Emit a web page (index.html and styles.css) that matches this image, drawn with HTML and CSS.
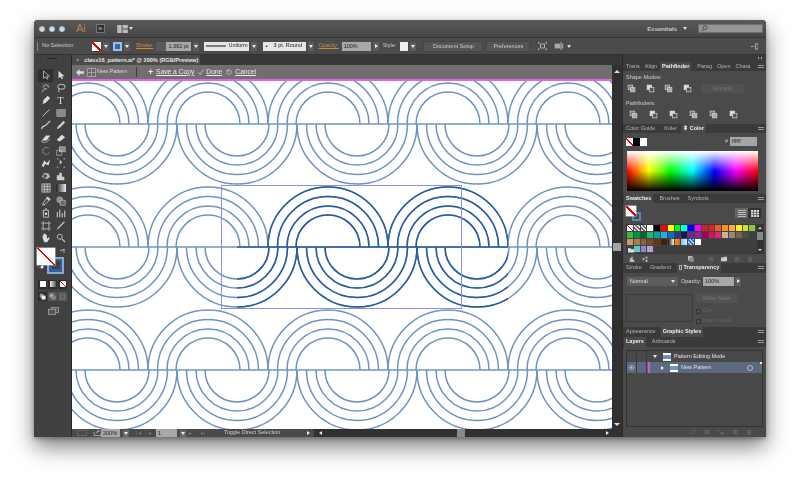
FILE: index.html
```html
<!DOCTYPE html>
<html lang="en">
<head>
<meta charset="utf-8">
<title>class16_pattern.ai</title>
<link rel="stylesheet" href="styles.css">
</head>
<body>
<svg class="defs" width="0" height="0" aria-hidden="true">
  <defs>
    <symbol id="pf" viewBox="0 0 12 12"><rect x="1.5" y="1.5" width="6" height="6" fill="#777" stroke="#ccc"/><rect x="4.5" y="4.5" width="6" height="6" fill="#aaa" stroke="#ccc"/></symbol>
    <symbol id="pg" viewBox="0 0 12 12"><rect x="1.5" y="1.5" width="6" height="6" fill="#ddd" stroke="#ddd"/><rect x="4.5" y="4.5" width="6" height="6" fill="#555" stroke="#ccc"/></symbol>
    <g id="up" fill="none"><path d="M-60 0A60 60 0 0 1 60 0M-50.5 0A50.5 50.5 0 0 1 50.5 0M-41 0A41 41 0 0 1 41 0M-32 0A32 32 0 0 1 32 0"/></g>
    <g id="dn" fill="none"><path d="M-60 0A60 60 0 0 0 60 0M-50.5 0A50.5 50.5 0 0 0 50.5 0M-41 0A41 41 0 0 0 41 0M-32 0A32 32 0 0 0 32 0"/></g>
    <g id="rowset">
      <use href="#up" x="88"/><use href="#up" x="208"/><use href="#up" x="328"/><use href="#up" x="448"/><use href="#up" x="568"/>
      <use href="#dn" x="-3"/><use href="#dn" x="117"/><use href="#dn" x="237"/><use href="#dn" x="357"/><use href="#dn" x="477"/><use href="#dn" x="597"/>
      <path d="M72 0H612" fill="none"/>
    </g>
    <g id="tileset">
      <use href="#up" x="328"/><use href="#up" x="448"/>
      <use href="#dn" x="237"/><use href="#dn" x="357"/><use href="#dn" x="477"/>
      <path d="M221 0H508" fill="none"/>
    </g>
    <clipPath id="tile"><rect x="237" y="180" width="271" height="130"/></clipPath>
  </defs>
</svg>
<div class="win">
  <header class="title">
    <div class="lights"><i></i><i></i><i></i></div>
    <span class="logo">Ai</span>
    <span class="br">Br</span>
    <svg class="wsp" viewBox="0 0 12 9"><path d="M0 0h5v9H0zM6 0h6v4H6zM6 5h6v4H6z" fill="#bbb"/></svg>
    <span class="tri-d"></span>
    <span class="fill"></span>
    <span class="ess">Essentials</span>
    <span class="tri-d ess-t"></span>
    <span class="search"><svg viewBox="0 0 8 8"><circle cx="4.5" cy="3" r="2.2" fill="none" stroke="#333" stroke-width=".8"/><path d="M3 5L1 7" stroke="#333"/></svg></span>
  </header>
  <div class="ctrl">
    <span class="grip"></span>
    <span class="lbl nosel">No Selection</span>
    <span class="sw-none cfill"></span><span class="ab"></span>
    <span class="strokeic"></span><span class="ab"></span>
    <span class="lbl orange m5">Stroke:</span>
    <span class="stepper"></span>
    <span class="inp w25">1.392 pt</span><span class="ab m3"></span>
    <span class="uni"><svg viewBox="0 0 22 2"><path d="M0 1H22" stroke="#222" stroke-width="1.2"/></svg>Uniform</span><span class="ab"></span>
    <span class="uni rnd"><b>•</b>3 pt. Round</span><span class="ab"></span>
    <span class="lbl orange m4">Opacity:</span>
    <span class="inp w29 m3">100%</span><span class="ab m3 tri-r"></span>
    <span class="lbl m4">Style:</span>
    <span class="white-sw"></span><span class="ab"></span>
    <span class="btn w58">Document Setup</span>
    <span class="btn w42">Preferences</span>
    <svg class="ci c1" viewBox="0 0 10 10"><path d="M0 2V0h2M8 0h2v2M10 8v2H8M2 10H0V8M2.5 2.5h5v5h-5z" fill="none" stroke="#ccc"/></svg>
    <svg class="ci c2" viewBox="0 0 12 10"><path d="M0 2h7v6H0z" fill="#aaa"/><path d="M8 0v10M10 2v6" stroke="#ccc"/></svg>
    <span class="tri-d c3"></span>
    <span class="fill"></span>
    <svg class="ci c4" viewBox="0 0 8 8"><path d="M3 4H0M5 1h3v6H5z" fill="none" stroke="#bbb"/></svg>
  </div>
  <div class="main">
    <aside class="tools">
      <div class="tgrip"></div>
      <div class="tgrid">
        <span class="tool on"><svg viewBox="0 0 12 12"><path d="M3 1v9l2.500-2 1.500 3 1.500-.8L7 7.400h3z" fill="none" stroke="#ddd" stroke-width=".8"/></svg></span>
        <span class="tool"><svg viewBox="0 0 12 12"><path d="M3 1v9l2.500-2 1.500 3 1.500-.8L7 7.400h3z" fill="#ddd"/></svg></span>
        <span class="tool"><svg viewBox="0 0 12 12"><path d="M5 6l-4 5M6 1v2M6 6v2M2 4.500h2M8 4.500h2M3 2l1.500 1.500M9 2L7.500 3.500" stroke="#ddd"/></svg></span>
        <span class="tool"><svg viewBox="0 0 12 12"><ellipse cx="6.500" cy="4.500" rx="4.500" ry="3" fill="none" stroke="#ddd"/><path d="M4 7q-2 2 0 4" stroke="#ddd" fill="none"/></svg></span>
        <span class="tool"><svg viewBox="0 0 12 12"><path d="M8 1l3 3-5 5-4 2 1-5z" fill="#ddd"/></svg></span>
        <span class="tool txt">T</span>
        <span class="tool"><svg viewBox="0 0 12 12"><path d="M2 10L10 2" stroke="#ddd"/></svg></span>
        <span class="tool"><svg viewBox="0 0 12 12"><rect x="1" y="2" width="10" height="8" fill="#888" stroke="#bbb" stroke-width=".6"/></svg></span>
        <span class="tool"><svg viewBox="0 0 12 12"><path d="M11 1L5 7M1 11q0-4 4-4" stroke="#ddd" stroke-width="1.300" fill="none"/></svg></span>
        <span class="tool"><svg viewBox="0 0 12 12"><path d="M9 1l2 2-7 7-3 1 1-3z" fill="#ccc"/></svg></span>
        <span class="tool"><svg viewBox="0 0 12 12"><path d="M1 9L6 3h5L7 9z" fill="#ddd"/><path d="M1 9v2h6l4-4" fill="none" stroke="#ddd" stroke-width=".7"/></svg></span>
        <span class="tool"><svg viewBox="0 0 12 12"><path d="M1 8l6-6 4 3-6 5H3z" fill="#ddd"/></svg></span>
        <span class="tool"><svg viewBox="0 0 12 12"><path d="M9 3a4 4 0 1 0 1 4" fill="none" stroke="#ccc" stroke-dasharray="1.500 1"/></svg></span>
        <span class="tool"><svg viewBox="0 0 12 12"><rect x="4" y="1" width="7" height="6" fill="#888" stroke="#ccc" stroke-width=".7"/><rect x="1" y="5" width="6" height="6" fill="none" stroke="#ccc" stroke-width=".7"/></svg></span>
        <span class="tool"><svg viewBox="0 0 12 12"><path d="M1 9l3-6 3 3 4-4-2 7-4-2-2 4z" fill="#ddd"/></svg></span>
        <span class="tool"><svg viewBox="0 0 12 12"><path d="M1 1h2M1 11h2M9 1h2M9 11h2M5 3l2 2-2 2z" stroke="#ccc" fill="#ccc"/></svg></span>
        <span class="tool"><svg viewBox="0 0 12 12"><path d="M1 7l3-5 5 1 2 4-4 3z" fill="#bbb"/><circle cx="5" cy="6" r="2" fill="#444"/></svg></span>
        <span class="tool"><svg viewBox="0 0 12 12"><path d="M1 11V5h3V2h3v5h3v4z" fill="#ccc"/></svg></span>
        <span class="tool"><svg viewBox="0 0 12 12"><path d="M1 1h10v10H1zM4.300 1v10M7.600 1v10M1 4.300h10M1 7.600h10" fill="#666" stroke="#ddd" stroke-width=".7"/></svg></span>
        <span class="tool grad"></span>
        <span class="tool"><svg viewBox="0 0 12 12"><path d="M8 1l3 3-6 6-3 1 1-3z" fill="none" stroke="#ddd"/><path d="M7 2l3 3" stroke="#ddd" stroke-width="2"/></svg></span>
        <span class="tool"><svg viewBox="0 0 12 12"><circle cx="4.500" cy="4.500" r="3.500" fill="#888" stroke="#ccc" stroke-width=".7"/><rect x="5" y="5" width="6" height="6" fill="#666" stroke="#ccc" stroke-width=".7"/></svg></span>
        <span class="tool"><svg viewBox="0 0 12 12"><path d="M5 1h2v2h2v8H3V3h2zM1 3h1M1 6h1" stroke="#ccc" fill="none"/><circle cx="6" cy="7" r="1.500" fill="#ddd"/></svg></span>
        <span class="tool"><svg viewBox="0 0 12 12"><path d="M1.500 11V5M4.500 11V2M7.500 11V6M10.500 11V3" stroke="#ccc" stroke-width="1.300"/></svg></span>
        <span class="tool"><svg viewBox="0 0 12 12"><rect x="2.500" y="2.500" width="7" height="7" fill="none" stroke="#ccc"/><path d="M0 2.500h2M10 2.500h2M0 9.500h2M10 9.500h2M2.500 0v2M9.500 0v2M2.500 10v2M9.500 10v2" stroke="#ccc" stroke-width=".7"/></svg></span>
        <span class="tool"><svg viewBox="0 0 12 12"><path d="M11 1L4 8 1 11l1-3 7-7z" fill="#ccc"/></svg></span>
        <span class="tool"><svg viewBox="0 0 12 12"><path d="M2 6V3h1v2-4h1v4-4h1.500v4V2H7v5l2-2 1.500 1-3 5H4z" fill="#ddd"/></svg></span>
        <span class="tool"><svg viewBox="0 0 12 12"><circle cx="4.500" cy="4.500" r="3" fill="none" stroke="#ccc"/><path d="M7 7l4 4" stroke="#ccc" stroke-width="1.500"/></svg></span>
      </div>
      <div class="fs">
        <div class="fs-top">
          <span class="bigfill"></span>
          <svg class="swap" viewBox="0 0 6 6"><path d="M1 1h3v3M3 0L4 1 5 0M0 2l1-1 1 1" fill="none" stroke="#ccc" stroke-width=".7"/></svg>
        </div>
        <div class="fs-bot">
          <svg class="deft" viewBox="0 0 6 6"><circle cx="2.500" cy="2.500" r="2.300" fill="#222" stroke="#aaa" stroke-width=".5"/><circle cx="4" cy="4" r="1.500" fill="#eee"/></svg>
          <span class="bigstroke"></span>
        </div>
      </div>
      <div class="modes">
        <span class="mode"><i class="m-w"></i></span><span class="mode"><i class="m-g"></i></span><span class="mode"><i class="sw-none m-n"></i></span>
      </div>
      <div class="modes draw">
        <span class="mode d1"><svg viewBox="0 0 8 8"><circle cx="3" cy="3" r="2.500" fill="#999"/><rect x="3" y="3" width="4.500" height="4.500" fill="#eee"/></svg></span>
        <span class="mode d2"><svg viewBox="0 0 8 8"><circle cx="3" cy="3" r="2.500" fill="#aaa"/><rect x="3" y="3" width="4.500" height="4.500" fill="#888"/></svg></span>
        <span class="mode d3"><svg viewBox="0 0 8 8"><rect x="2" y="2" width="4.500" height="4.500" fill="none" stroke="#777"/></svg></span>
      </div>
      <svg class="screen" viewBox="0 0 12 9"><rect x="3.500" y=".5" width="8" height="6" fill="#555" stroke="#bbb" stroke-width=".7"/><rect x=".5" y="2.500" width="8" height="6" fill="#555" stroke="#bbb" stroke-width=".7"/></svg>
    </aside>

    <section class="center">
      <div class="doctabs"><div class="doctab"><span class="x">×</span>class16_pattern.ai* @ 200% (RGB/Preview)</div></div>
      <div class="patbar">
        <svg class="back" viewBox="0 0 9 8"><path d="M0 4l4-4v2.500h5v3H4V8z" fill="#ddd"/></svg>
        <svg class="pat-ic" viewBox="0 0 9 9"><path d="M.5.5h8v8h-8zM4.500.5v8M.5 4.500h8" fill="#666" stroke="#bbb" stroke-width=".7"/></svg>
        <span class="pat-name">New Pattern</span>
        <span class="sep"></span>
        <span class="plus">+</span><span class="act">Save a Copy</span>
        <svg class="check" viewBox="0 0 7 7"><path d="M.5 4l2 2.500L6.500.5" fill="none" stroke="#ccc"/></svg><span class="act">Done</span>
        <svg class="clock" viewBox="0 0 7 7"><circle cx="3.500" cy="3.500" r="2.800" fill="none" stroke="#ccc" stroke-width=".8"/><path d="M1 2h2v2" fill="none" stroke="#ccc" stroke-width=".7"/></svg><span class="act">Cancel</span>
      </div>
      <div class="work">
        <div class="canvas">
          <svg class="art" viewBox="72 79 540 350" width="540" height="350">
            <g class="base">
              <use href="#rowset" y="124"/><use href="#rowset" y="247"/><use href="#rowset" y="370"/>
            </g>
            <g class="dark" clip-path="url(#tile)"><use href="#tileset" y="247"/></g>
            <rect class="selbox" x="221.500" y="185.500" width="240" height="123"/>
            <path class="magenta" d="M72 80H612"/>
          </svg>
        </div>
        <div class="vscroll"><span class="arrow-u"></span><span class="thumb"></span><span class="arrow-dn"></span></div>
      </div>
      <div class="status">
        <svg class="st1" viewBox="0 0 10 6"><path d="M.5.5h9v5h-9z" fill="none" stroke="#666"/></svg>
        <svg class="st2" viewBox="0 0 9 7"><path d="M.5 2v4.500h8V4M3 4q0-3 3-3M5 0l2 1-2 2" fill="none" stroke="#ccc" stroke-width=".8"/></svg>
        <span class="inp zoomv">200%</span><span class="ab lt"></span>
        <span class="nav nv1">|◂</span><span class="nav">◂</span>
        <span class="inp pagev">1</span><span class="ab lt"></span>
        <span class="nav nv2">▸</span><span class="nav">▸|</span>
        <span class="status-txt">Toggle Direct Selection</span>
        <span class="tri-r2"></span>
        <div class="hscroll"><span class="tri-l2"></span><span class="hthumb"></span><span class="tri-r2 hend"></span></div>
      </div>
    </section>

    <aside class="dock">
      <div class="dockgrip"><span></span></div>

      <nav class="tabs">
        <span>Trans</span><span>Align</span><span class="active a-pf">Pathfinder</span><span class="t-pa">Parag</span><span>Open</span><span>Chara</span><em class="menu"></em>
      </nav>
      <div class="pane p-path">
        <div class="ph">Shape Modes:</div>
        <div class="irow ir1">
          <svg><use href="#pf"/></svg><svg><use href="#pg"/></svg><svg><use href="#pf"/></svg><svg><use href="#pg"/></svg>
          <span class="dbtn exp">Expand</span>
        </div>
        <div class="ph ph2">Pathfinders:</div>
        <div class="irow ir2">
          <svg><use href="#pf"/></svg><svg><use href="#pg"/></svg><svg><use href="#pg"/></svg><svg><use href="#pf"/></svg><svg><use href="#pf"/></svg><svg><use href="#pg"/></svg>
        </div>
      </div>

      <nav class="tabs">
        <span>Color Guide</span><span class="t-k">Kuler</span><span class="active a-col">⬍ Color</span><em class="menu"></em>
      </nav>
      <div class="pane p-color">
        <div class="colrow">
          <span class="sw-none csw"></span><span class="csw blk"></span><span class="csw wht"></span>
          <span class="hash">#</span><span class="hexin">ffffff</span>
        </div>
        <div class="spectrum"></div>
      </div>

      <nav class="tabs wide">
        <span class="active a-sw">Swatches</span><span>Brushes</span><span>Symbols</span><em class="menu"></em>
      </nav>
      <div class="pane p-sw">
        <div class="swtop">
          <span class="mini"><span class="sw-none minif"></span><span class="minis"></span></span>
          <span class="view">
            <i class="v-list"><svg viewBox="0 0 8 7"><path d="M0 .5h8M0 2.500h8M0 4.500h8M0 6.500h8" stroke="#bbb"/></svg></i>
            <i class="v-grid"><svg viewBox="0 0 8 7"><path d="M0 0h8v7H0z" fill="#ddd"/><path d="M2.500 0v7M5.500 0v7M0 2.300h8M0 4.700h8" stroke="#333" stroke-width=".6"/></svg></i>
          </span>
        </div>
        <div class="swbox">
          <div class="swgrid">
            <i class="sw-none"></i><i class="sw-reg"></i><i class="sw-reg"></i><i style="background:#fff"></i><i style="background:#000"></i><i style="background:#f00"></i><i style="background:#ff0"></i><i style="background:#0f0"></i><i style="background:#0ff"></i><i style="background:#00f"></i><i style="background:#f0f"></i><i style="background:#c1272d"></i><i style="background:#ed1c24"></i><i style="background:#f15a24"></i><i style="background:#f7931e"></i><i style="background:#fbb03b"></i><i style="background:#fcee21"></i><i style="background:#d9e021"></i><i style="background:#8cc63f"></i>
            <i style="background:#39b54a"></i><i style="background:#009245"></i><i style="background:#006837"></i><i style="background:#22b573"></i><i style="background:#00a99d"></i><i style="background:#29abe2"></i><i style="background:#0071bc"></i><i style="background:#2e3192"></i><i style="background:#1b1464"></i><i style="background:#662d91"></i><i style="background:#93278f"></i><i style="background:#9e005d"></i><i style="background:#d4145a"></i><i style="background:#ed1e79"></i><i style="background:#c7b299"></i><i style="background:#998675"></i><i style="background:#736357"></i><i style="background:#534741"></i><i class="sw-empty"></i>
            <i style="background:#c69c6d"></i><i style="background:#a67c52"></i><i style="background:#8c6239"></i><i style="background:#754c24"></i><i style="background:#603813"></i><i style="background:#42210b"></i><i class="sw-g1"></i><i class="sw-g2"></i><i class="sw-g3"></i><i class="sw-g4"></i><i class="sw-g5"></i><i class="sw-empty"></i><i class="sw-empty"></i><i class="sw-empty"></i><i class="sw-empty"></i><i class="sw-empty"></i><i class="sw-empty"></i><i class="sw-empty"></i><i class="sw-empty"></i>
            <i class="sw-folder"><svg viewBox="0 0 7 6"><path d="M0 1h3l1 1h3v4H0z" fill="#ddd"/></svg></i><i style="background:#5fc6c9"></i><i style="background:#8a8ac8"></i><i style="background:#b79fd0"></i>
          </div>
          <div class="swscroll"><span class="arrow-u"></span><span class="swthumb"></span><span class="arrow-dn"></span></div>
        </div>
        <div class="swbot">
          <svg viewBox="0 0 8 8"><path d="M1 8V3h2V1h2v4h2v3z" fill="#bbb"/></svg>
          <svg viewBox="0 0 8 8"><circle cx="2" cy="4" r="1.500" fill="#bbb"/><circle cx="6" cy="2" r="1.500" fill="#bbb"/><circle cx="6" cy="6.500" r="1.500" fill="#bbb"/></svg>
          <span class="fill"></span>
          <svg viewBox="0 0 8 8"><path d="M0 0h6v6H0z" fill="#bbb"/><path d="M2 2h6v6H2z" fill="#888"/></svg>
          <svg viewBox="0 0 8 8"><path d="M1 1h6v6H1z" fill="#5e5e5e"/></svg>
          <svg viewBox="0 0 8 8"><path d="M0 2h3l1-1h4v6H0z" fill="#ccc"/></svg>
          <svg viewBox="0 0 8 8"><path d="M1 1h6v6H1z" fill="#5e5e5e"/></svg>
          <svg viewBox="0 0 8 8"><path d="M1 2h6L6 8H2zM3 0h2v1H3z" fill="#5e5e5e"/></svg>
        </div>
      </div>

      <nav class="tabs t10 wide">
        <span>Stroke</span><span>Gradient</span><span class="active a-tr">▯ Transparency</span><em class="menu"></em>
      </nav>
      <div class="pane p-tr">
        <div class="trtop">
          <span class="select">Normal<b class="tri-d"></b></span>
          <span class="oplbl">Opacity:</span>
          <span class="inp opin">100%</span><span class="ab tri-r"></span>
        </div>
        <div class="trbody">
          <span class="preview"></span>
          <div class="trcol">
            <span class="dbtn mask">Make Mask</span>
            <label class="chk"><i></i>Clip</label>
            <label class="chk"><i></i>Invert Mask</label>
          </div>
        </div>
      </div>

      <nav class="tabs t10">
        <span>Appearance</span><span class="active a-gs">Graphic Styles</span><em class="menu"></em>
      </nav>
      <nav class="tabs t10 wide">
        <span class="active a-ly">Layers</span><span>Artboards</span><em class="menu"></em>
      </nav>
      <div class="pane p-ly">
        <div class="lybox">
          <div class="lyrow">
            <span class="c-eye"></span><span class="c-lock"></span>
            <span class="lyin l1"><b class="tri-d w"></b><i class="thumb-l"></i>Pattern Editing Mode</span>
          </div>
          <div class="lyrow sel">
            <span class="c-eye"><svg viewBox="0 0 8 6"><path d="M0 3q4-5 8 0q-4 5-8 0z" fill="none" stroke="#ddd" stroke-width=".7"/><circle cx="4" cy="3" r="1.200" fill="#ddd"/></svg></span><span class="c-lock"></span>
            <span class="lybar"></span>
            <span class="lyin l2"><b class="tri-r3"></b><i class="thumb-l"></i>New Pattern</span>
            <span class="target"></span><span class="corner"></span>
          </div>
        </div>
        <div class="lybot">
          <svg viewBox="0 0 8 8"><circle cx="4.500" cy="3.500" r="2.500" fill="none" stroke="#5f5f5f"/><path d="M3 5.500L1 7.500" stroke="#5f5f5f"/></svg>
          <svg viewBox="0 0 8 8"><path d="M1 1h6v6H1z" fill="#5f5f5f"/></svg>
          <svg viewBox="0 0 8 8"><path d="M0 2h2M3 4h5v3H3zM1 1v4" stroke="#5f5f5f" fill="#5f5f5f"/></svg>
          <svg viewBox="0 0 8 8"><path d="M1 1h6v6H1z" fill="#5f5f5f"/></svg>
          <svg viewBox="0 0 8 8"><path d="M1 2h6L6 8H2zM3 0h2v1H3z" fill="#5f5f5f"/></svg>
        </div>
      </div>
    </aside>
  </div>
</div>
</body>
</html>
```
FILE: styles.css
```css
* { box-sizing: border-box; }
html, body { margin: 0; height: 100%; overflow: hidden; background: #fff; }
body { padding: 20px 34px 0; font: 5.500px/1 "Liberation Sans", Arial, sans-serif; color: #ddd; }
.defs { display: block; height: 0; }
i, em { font-style: normal; display: block; }
svg { display: block; }
.fill { flex: 1; }

.win { width: 732px; height: 417px; display: flex; flex-direction: column; background: #3f3f3f; border-radius: 4px 4px 0 0; box-shadow: 0 10px 22px rgba(0,0,0,.5), 0 2px 5px rgba(0,0,0,.3); filter: blur(.3px); overflow: hidden; }

.title { height: 18px; display: flex; align-items: center; background: linear-gradient(#5a5a5a, #464646); padding-left: 5px; border-bottom: 1px solid #343434; flex: none; }
.lights { display: flex; gap: 4px; }
.lights i { width: 6px; height: 6px; border-radius: 50%; background: radial-gradient(circle at 50% 55%, #dbe6f0 20%, #7d8c9a); }
.logo { margin-left: 11px; font-size: 11px; color: #b97f55; width: 15px; }
.br { margin-left: 5px; width: 9px; height: 9px; background: #333; border: 1px solid #777; font-size: 4px; text-align: center; line-height: 7px; color: #ccc; }
.wsp { margin-left: 12px; width: 11px; height: 8px; }
.tri-d { width: 0; height: 0; border: 2px solid transparent; border-top: 3px solid #ddd; border-bottom: 0; margin-left: 1px; display: block; }
.ess { font-size: 6px; font-weight: bold; color: #ccc; }
.ess-t { margin: 0 11px 0 6px; }
.search { width: 65px; height: 9px; background: #959595; border: 1px solid #6e6e6e; margin-right: 3px; padding: 0 2px; }
.search svg { width: 7px; height: 7px; }

.ctrl { height: 17px; flex: none; display: flex; align-items: center; background: #4b4b4b; border-bottom: 1px solid #333; padding-left: 3px; }
.grip { width: 1px; height: 9px; background: #888; margin-right: 4px; }
.lbl { color: #ccc; white-space: nowrap; }
.nosel { width: 50px; }
.orange { color: #cf8a3e; text-decoration: underline; }
.m5 { margin-left: 6px; }
.m4 { margin-left: 4px; }
.m3 { margin-left: 3px; }
.sw-none { background: linear-gradient(to top right, #fff 44%, #e00 44%, #e00 56%, #fff 56%); }
.cfill { width: 9px; height: 9px; }
.ab { width: 6px; height: 9px; background: #5c5c5c; margin-left: 2px; position: relative; display: block; flex: none; }
.ab::after { content: ""; position: absolute; left: 1px; top: 3px; border: 2px solid transparent; border-top: 3px solid #eee; border-bottom: 0; }
.ab.tri-r::after { left: 2px; top: 2px; border: 2px solid transparent; border-left: 3px solid #eee; border-right: 0; }
.strokeic { width: 9px; height: 9px; background: #2f6cb0; border: 2px solid #9dbfe6; margin-left: 4px; }
.stepper { width: 10px; height: 9px; background: #5a5a5a; margin-left: 3px; }
.inp { height: 9px; background: #a8a8a8; color: #222; padding-left: 2px; line-height: 9px; display: block; flex: none; }
.w25 { width: 25px; }
.w29 { width: 29px; }
.uni { width: 45px; height: 9px; background: #e6e6e6; color: #222; margin-left: 5px; display: flex; align-items: center; gap: 2px; padding-left: 2px; }
.uni svg { width: 20px; height: 2px; flex: none; }
.rnd { width: 43px; margin-left: 6px; gap: 6px; }
.rnd b { font-size: 6px; }
.white-sw { width: 8px; height: 9px; background: #eee; margin-left: 4px; }
.btn { height: 9px; background: #555; color: #ccc; border-radius: 1px; text-align: center; line-height: 9px; box-shadow: 0 0 0 .5px #404040; }
.w58 { width: 58px; margin-left: 8px; }
.w42 { width: 42px; margin-left: 5px; }
.ci { flex: none; }
.c1 { width: 9px; height: 8px; margin-left: 9px; }
.c2 { width: 11px; height: 8px; margin-left: 7px; }
.c3 { margin-left: 2px; }
.c4 { width: 7px; height: 7px; margin-right: 8px; }

.main { flex: 1; display: flex; min-height: 0; }

.tools { width: 38px; flex: none; background: #414141; border-right: 1px solid #262626; padding: 0 4px; display: flex; flex-direction: column; }
.tgrip { height: 14px; flex: none; }
.tgrip::after { content: ""; display: block; width: 10px; height: 1px; background: #222; margin: 3px 0 0 9px; }
.tgrid { display: grid; grid-template-columns: 15px 15px; grid-auto-rows: 12.550px; flex: none; }
.tool { display: flex; align-items: center; justify-content: center; }
.tool svg { width: 10px; height: 10px; }
.tool.on { background: #303030; }
.tool.txt { font: 10px "Liberation Serif", serif; color: #ddd; }
.tool.grad::after { content: ""; width: 10px; height: 8px; background: linear-gradient(90deg, #222, #eee); }
.fs { height: 28px; margin-top: 3px; width: 30px; flex: none; }
.fs-top { display: flex; }
.bigfill { width: 18px; height: 17px; position: relative; z-index: 1; box-shadow: 0 0 0 .5px #ccc; margin-left: -1px; background: linear-gradient(to top right, #fff 47%, #e00 47%, #e00 53%, #fff 53%); flex: none; }
.swap { width: 6px; height: 6px; margin: 1px 0 0 5px; }
.fs-bot { display: flex; margin-top: -8px; }
.deft { width: 6px; height: 6px; margin: 6px 2px 0 0; }
.bigstroke { width: 17px; height: 17px; border: 2px solid #8fa8c8; background: #2a5ea8; margin-left: 1px; flex: none; }
.bigstroke::after { content: ""; display: block; margin: 2.500px; height: 8px; background: #414141; }
.modes { display: flex; gap: 1px; margin-top: 4px; flex: none; }
.mode { width: 10px; height: 9px; background: #2e2e2e; display: flex; align-items: center; justify-content: center; }
.mode i { width: 6px; height: 6px; }
.m-w { background: #fff; }
.m-g { background: linear-gradient(90deg, #eee, #555); }
.draw { margin-top: 3px; }
.d1 { background: #2e2e2e; }
.d2, .d3 { background: #5a5a5a; }
.mode svg { width: 7px; height: 7px; }
.screen { width: 11px; height: 8px; margin: 6px 0 0 10px; flex: none; }

.center { width: 550px; flex: none; display: flex; flex-direction: column; }
.doctabs { height: 10px; background: #383838; flex: none; }
.doctab { width: 128px; height: 10px; background: #4b4b4b; padding-left: 4px; font-size: 5.600px; font-weight: bold; line-height: 10px; color: #e6e6e6; white-space: nowrap; }
.doctab .x { font-weight: normal; margin-right: 5px; color: #bbb; }
.patbar { height: 14px; width: 540px; flex: none; background: #6f6f6f; display: flex; align-items: center; padding-left: 2px; position: relative; z-index: 1; margin-bottom: -14px; }
.back { width: 8px; height: 7px; margin-left: 2px; }
.pat-ic { width: 9px; height: 9px; margin-left: 3px; }
.pat-name { margin-left: 1px; width: 39px; color: #ddd; }
.sep { width: 1px; height: 10px; background: #3a3a3a; }
.plus { margin-left: 11px; font-size: 9px; font-weight: bold; color: #e8e8e8; width: 8px; }
.act { font-size: 6.700px; color: #ececec; text-decoration: underline; }
.check { width: 6px; height: 6px; margin: 0 2px 0 4px; }
.clock { width: 6px; height: 6px; margin: 0 3px 0 4px; }

.work { flex: 1; display: flex; min-height: 0; }
.canvas { width: 540px; height: 364px; background: #fff; padding-top: 14px; }
.art { background: #fff; }
.base { stroke: #6f94c2; stroke-width: 1.500px; }
.dark { stroke: #2a5c9f; stroke-width: 1.500px; }
.selbox { fill: none; stroke: #8d8df2; stroke-width: 1; }
.magenta { stroke: #ea62e4; stroke-width: 2; }
.vscroll { width: 10px; background: #303030; display: flex; flex-direction: column; align-items: center; padding: 5px 0 3px; }
.arrow-u { border: 3px solid transparent; border-bottom: 3px solid #ddd; border-top: 0; display: block; }
.arrow-dn { border: 3px solid transparent; border-top: 3px solid #ddd; border-bottom: 0; display: block; }
.thumb { width: 8px; height: 8px; background: #a4a4a4; margin: 170px 0 auto; }

.status { height: 8px; flex: none; display: flex; align-items: center; background: #4a4a4a; }
.st1 { width: 10px; height: 6px; margin-left: 5px; }
.st2 { width: 9px; height: 6px; margin-left: 6px; margin-right: -1px; }
.zoomv { width: 19px; margin-left: 0; }
.status .inp { background: #a8a8a8; height: 8px; line-height: 8px; }
.ab.lt { background: #686868; margin-left: 3px; height: 7px; }
.ab.lt::after { top: 2px; }
.nav { color: #777; font-size: 6px; width: 9px; margin-left: 3px; white-space: nowrap; }
.nv1 { margin-left: 7px; }
.nv2 { margin-left: 3px; }
.pagev { width: 21px; margin-left: -1px; }
.status-txt { margin-left: 14px; width: 83px; color: #ccc; white-space: nowrap; }
.tri-r2 { border: 2.500px solid transparent; border-left: 3px solid #eee; border-right: 0; display: block; }
.tri-l2 { border: 2.500px solid transparent; border-right: 3px solid #eee; border-left: 0; display: block; margin-left: 5px; }
.hscroll { flex: 1; height: 8px; margin-left: 4px; background: #303030; display: flex; align-items: center; padding-right: 13px; }
.hthumb { width: 8px; height: 8px; background: #8a8a8a; margin-left: 135px; }
.hend { margin-left: auto; }

.dock { width: 144px; flex: none; background: #4a4a4a; border-left: 1px solid #2a2a2a; display: flex; flex-direction: column; }
.dockgrip { height: 7px; background: #3a3a3a; display: flex; justify-content: flex-end; padding: 2px 3px; flex: none; }
.dockgrip span { width: 5px; height: 2px; background: repeating-linear-gradient(90deg, #aaa 0 1px, transparent 1px 3px); }
.tabs { height: 9px; flex: none; background: #3a3a3a; display: flex; align-items: stretch; padding-left: 1px; color: #b4b4b4; font-size: 5.500px; }
.t10 { height: 10px; }
.tabs span { padding: 0 2px; display: flex; align-items: center; margin-right: 1px; white-space: nowrap; }
.tabs.wide span { margin-right: 4px; }
.tabs .active { background: #4a4a4a; color: #f0f0f0; font-weight: bold; }
.tabs .menu { margin: auto 2px auto auto; width: 6px; height: 4px; background: repeating-linear-gradient(#999 0 1px, transparent 1px 2px); }
.t-pa { margin-left: 3px; }
.t-k { margin-left: 4px; }
.a-col { margin-left: 1px; }

.pane { flex: none; padding: 0 3px; }
.p-path { height: 53px; padding-top: 4px; }
.ph { color: #d0d0d0; }
.ph2 { margin-top: 8px; }
.irow { display: flex; align-items: center; }
.irow svg { width: 9px; height: 9px; flex: none; }
.ir1 { margin-top: 3px; padding-left: 1px; gap: 9.500px; }
.ir2 { margin-top: 4px; padding-left: 3px; gap: 11px; }
.dbtn { background: #525252; color: #777; text-align: center; display: block; line-height: 9px; height: 9px; }
.exp { width: 43px; margin-left: 0; }

.p-color { height: 61px; padding-top: 4px; }
.colrow { display: flex; align-items: center; height: 9px; }
.csw { width: 7px; height: 8px; }
.blk { background: #000; }
.wht { background: #fff; }
.hash { margin-left: auto; color: #bbb; margin-right: 2px; }
.hexin { width: 27px; height: 9px; background: #a4a4a4; color: #333; line-height: 9px; padding-left: 2px; margin-right: 6px; }
.spectrum { width: 131px; height: 40px; margin: 5px 0 0 1px; background: linear-gradient(#fff, rgba(255,255,255,0) 50%, rgba(0,0,0,0) 50%, #000), linear-gradient(90deg, #f00, #ff0 16.700%, #0f0 33.300%, #0ff 50%, #00f 66.700%, #f0f 83.300%, #f00); }

.p-sw { height: 60px; padding-top: 3px; }
.swtop { display: flex; justify-content: space-between; height: 15px; }
.mini { width: 16px; height: 15px; display: block; }
.minif { width: 10px; height: 10px; display: block; position: relative; z-index: 1; box-shadow: 0 0 0 .5px #ccc; }
.minis { width: 9px; height: 9px; display: block; border: 2px solid #5b86bd; margin: -4px 0 0 6px; }
.view { width: 26px; height: 10px; margin: 2px 2px 0 0; background: #333; display: flex; }
.view i { flex: 1; display: flex; align-items: center; justify-content: center; }
.v-list { background: #666; }
.view svg { width: 8px; height: 7px; }
.swbox { display: flex; height: 30px; margin-top: 3px; width: 138px; background: #3f3f3f; padding: 1px; box-shadow: inset 0 0 0 .5px #333; }
.swgrid { width: 129px; display: grid; grid-template-columns: repeat(19, 6.800px); grid-auto-rows: 7px; }
.swgrid i { border-right: .3px solid #444; border-bottom: .3px solid #444; }
.sw-reg { background: repeating-linear-gradient(45deg, #ddd 0 1.500px, #666 1.500px 3px); }
.sw-g1 { background: linear-gradient(90deg, #111, #fff); }
.sw-g2 { background: linear-gradient(90deg, #f7931e, #f15a24); }
.sw-g3 { background: linear-gradient(90deg, #5fd0e8, #d8f4f8); }
.sw-g4 { background: repeating-linear-gradient(45deg, #2c6fa8 0 1.500px, #b7d2e8 1.500px 3px); }
.sw-g5 { background: linear-gradient(#fff 42%, #3a6ab0 42%, #3a6ab0 58%, #fff 58%); }
.swgrid .sw-empty { background: #3f3f3f; border: 0; }
.swgrid .sw-folder { background: #3f3f3f; border: 0; padding: .5px; }
.sw-folder svg { width: 6px; height: 6px; }
.swscroll { width: 7px; margin-left: 1px; background: #333; display: flex; flex-direction: column; align-items: center; padding: 2px 0; justify-content: space-between; }
.swscroll .arrow-u { border-width: 0 2px 2px; }
.swscroll .arrow-dn { border-width: 2px 2px 0; }
.swthumb { width: 6px; height: 8px; background: #888; margin-bottom: 6px; }
.swbot { display: flex; align-items: center; height: 9px; padding: 1px 0 0 3px; gap: 7px; }
.swbot svg { width: 6px; height: 6px; flex: none; }
.swbot .fill { flex: 0 0 26px; }
.swbot svg:nth-of-type(3) { margin-right: 7px; }

.a-tr { margin-left: 0; }
.p-tr { height: 54px; padding-top: 4px; }
.trtop { display: flex; align-items: center; height: 9px; padding-left: 1px; }
.select { width: 51px; height: 9px; background: #5d5d5d; padding: 0 3px; display: flex; align-items: center; justify-content: space-between; color: #ddd; }
.oplbl { margin-left: 3px; width: 22px; color: #ddd; }
.opin { width: 31px; }
.opin + .ab { margin-left: 1px; }
.trbody { display: flex; margin-top: 8px; gap: 3px; }
.preview { width: 67px; height: 28px; border: 1px solid #3a3a3a; display: block; }
.trcol { display: flex; flex-direction: column; }
.mask { width: 42px; }
.chk { display: flex; align-items: center; gap: 2px; color: #666; height: 10px; }
.chk i { width: 5px; height: 5px; border: .7px solid #333; background: #4e4e4e; }
.chk:first-of-type { margin-top: 3px; }

.a-gs { margin-left: 2px; }
.p-ly { height: 90px; padding-top: 3px; }
.lybox { width: 137px; height: 77px; border: 1px solid #333; background: #484848; }
.lyrow { height: 11px; display: flex; align-items: center; position: relative; color: #e4e4e4; }
.lyrow.sel { background: #5b6a80; }
.c-eye { width: 10px; height: 100%; border-right: 1px solid #3a3a3a; display: flex; align-items: center; justify-content: center; flex: none; }
.c-eye svg { width: 7px; height: 5px; }
.c-lock { width: 10px; height: 100%; border-right: 1px solid #3a3a3a; flex: none; }
.lybar { width: 2px; height: 100%; background: #e04fd8; margin-left: 1px; flex: none; }
.lyin { display: flex; align-items: center; white-space: nowrap; }
.l1 { padding-left: 6px; }
.l2 { padding-left: 11px; }
.lyin .tri-d { border-width: 3px 2px 0; }
.w { border-top-color: #eee; margin: 0 6px 0 0; }
.tri-r3 { border: 2px solid transparent; border-left: 3px solid #eee; border-right: 0; margin-right: 6px; }
.thumb-l { width: 8px; height: 8px; background: linear-gradient(#fff 30%, #6d93c8 30%, #6d93c8 70%, #fff 70%); margin-right: 3px; }
.target { width: 6px; height: 6px; border-radius: 50%; border: 1px solid #bbb; position: absolute; right: 9px; top: 3px; }
.corner { width: 2px; height: 2px; background: #eee; position: absolute; right: 0; top: 0; }
.lybot { display: flex; height: 9px; justify-content: flex-end; align-items: center; gap: 8px; padding: 0 11px 0 0; }
.lybot svg { width: 6px; height: 6px; }
```
